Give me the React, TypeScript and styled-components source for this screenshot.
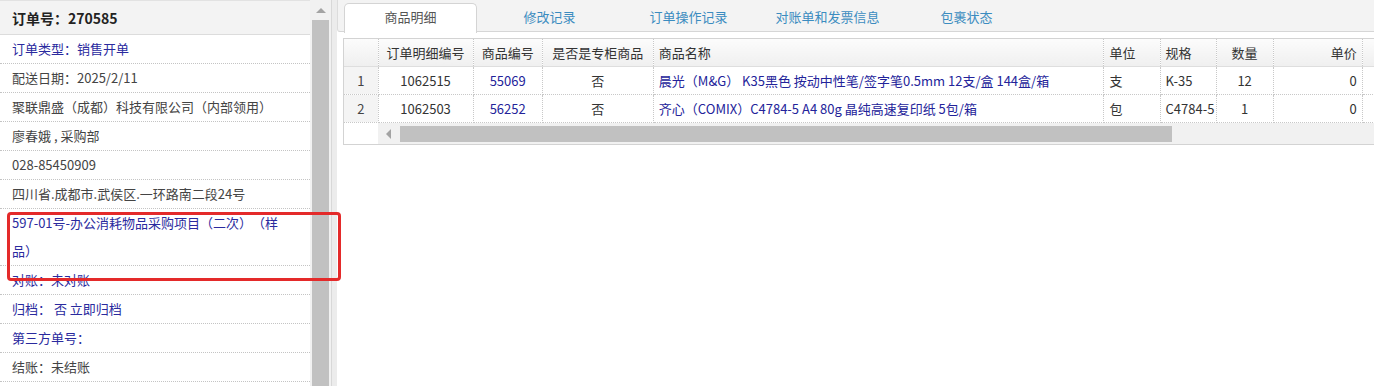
import React from "react";
import styled, { createGlobalStyle } from "styled-components";

const GlobalStyle = createGlobalStyle`
    html, body {
        margin: 0;
        padding: 0;
        background: #fff;
    }
    body {
        font-family: "Noto Sans CJK SC", "Microsoft YaHei", sans-serif;
        font-size: 13px;
        color: #333;
        text-spacing-trim: space-all;
    }
`;

interface infoRow {
    text: string;
    blue?: boolean;
}

const infoRows: infoRow[] = [
    { text: "订单类型：销售开单", blue: true },
    { text: "配送日期：2025/2/11" },
    { text: "聚联鼎盛（成都）科技有限公司（内部领用）" },
    { text: "廖春娥 , 采购部" },
    { text: "028-85450909" },
    { text: "四川省.成都市.武侯区.一环路南二段24号" },
    { text: "597-01号-办公消耗物品采购项目（二次）（样品）", blue: true },
    { text: "对账：未对账", blue: true },
    { text: "归档：  否 立即归档", blue: true },
    { text: "第三方单号：", blue: true },
    { text: "结账：未结账" },
];

const tabs = ["商品明细", "修改记录", "订单操作记录", "对账单和发票信息", "包裹状态"];

type Align = "left" | "center" | "right";

interface column {
    title: string;
    width: number;
    align: Align;
}

// last column runs past the window edge, so it stays blank
const columns: column[] = [
    { title: "", width: 34, align: "center" },
    { title: "订单明细编号", width: 95, align: "center" },
    { title: "商品编号", width: 69, align: "center" },
    { title: "是否是专柜商品", width: 111, align: "center" },
    { title: "商品名称", width: 450, align: "left" },
    { title: "单位", width: 56, align: "left" },
    { title: "规格", width: 56, align: "left" },
    { title: "数量", width: 57, align: "center" },
    { title: "单价", width: 89, align: "right" },
    { title: "", width: 130, align: "right" },
];

const items = [
    {
        id: "1062515",
        sku: "55069",
        counter: "否",
        name: "晨光（M&G） K35黑色 按动中性笔/签字笔0.5mm 12支/盒 144盒/箱",
        unit: "支",
        spec: "K-35",
        qty: "12",
        price: "0",
    },
    {
        id: "1062503",
        sku: "56252",
        counter: "否",
        name: "齐心（COMIX）C4784-5 A4 80g 晶纯高速复印纸 5包/箱",
        unit: "包",
        spec: "C4784-5",
        qty: "1",
        price: "0",
    },
];

const tableWidth = columns.reduce((sum, c) => sum + c.width, 0);

const App = () => {
    return (
        <>
            <GlobalStyle />
            <Page>
                <LeftPanel>
                    <InfoList>
                        <InfoHeader>订单号：270585</InfoHeader>
                        {infoRows.map((row, i) => (
                            <InfoItem key={i} $blue={!!row.blue}>{row.text}</InfoItem>
                        ))}
                    </InfoList>
                    <VScroll>
                        <UpArrow />
                        <VThumb />
                    </VScroll>
                </LeftPanel>
                <Splitter />
                <RightPanel>
                    <TabBar>
                        {tabs.map((t, i) => (
                            <Tab key={t} $active={i === 0}>{t}</Tab>
                        ))}
                    </TabBar>
                    <GridBox style={{ width: tableWidth + 2 }}>
                        <Grid>
                            <colgroup>
                                {columns.map((c, i) => <col key={i} style={{ width: c.width }} />)}
                            </colgroup>
                            <thead>
                                <tr>
                                    {columns.map((c, i) => (
                                        <HeadCell key={i} $align={c.align}>{c.title}</HeadCell>
                                    ))}
                                </tr>
                            </thead>
                            <tbody>
                                {items.map((it, i) => (
                                    <tr key={it.id}>
                                        <NumCell>{i + 1}</NumCell>
                                        <Cell $align="center">{it.id}</Cell>
                                        <Cell $align="center"><Link>{it.sku}</Link></Cell>
                                        <Cell $align="center">{it.counter}</Cell>
                                        <Cell $align="left"><Link>{it.name}</Link></Cell>
                                        <Cell $align="left">{it.unit}</Cell>
                                        <Cell $align="left">{it.spec}</Cell>
                                        <Cell $align="center">{it.qty}</Cell>
                                        <Cell $align="right">{it.price}</Cell>
                                        <Cell $align="right" />
                                    </tr>
                                ))}
                            </tbody>
                        </Grid>
                        <HScrollRow>
                            <HScrollGap />
                            <HScroll>
                                <LeftArrow />
                                <HThumb />
                            </HScroll>
                        </HScrollRow>
                    </GridBox>
                </RightPanel>
                <Highlight />
            </Page>
        </>
    );
};
export default App;

const Page = styled.div`
    position: relative;
    display: flex;
    width: 1374px;
    height: 386px;
    overflow: hidden;
`;

const LeftPanel = styled.div`
    display: flex;
    flex: none;
    width: 331px;
    height: 100%;
`;

const InfoList = styled.div`
    width: 310px;
    flex: none;
`;

const InfoHeader = styled.div`
    height: 35px;
    line-height: 35px;
    padding-left: 12px;
    background: #f3f3f3;
    border-top: 1px solid #e2e2e2;
    border-bottom: 1px solid #dcdcdc;
    box-sizing: border-box;
    font-size: 14px;
    font-weight: bold;
    color: #222;
`;

const InfoItem = styled.div<{ $blue: boolean }>`
    padding: 0 22px 0 12px;
    line-height: 28px;
    border-bottom: 1px dotted #c4c4c4;
    color: ${props => props.$blue ? '#2a2a9e' : '#444'};
`;

const VScroll = styled.div`
    position: relative;
    width: 21px;
    flex: none;
    background: #f1f1f1;
    padding: 20px 2px 0;
    box-sizing: border-box;
`;

const UpArrow = styled.div`
    position: absolute;
    top: 8px;
    left: 6px;
    width: 0;
    height: 0;
    border-left: 5px solid transparent;
    border-right: 5px solid transparent;
    border-bottom: 5px solid #a3a3a3;
`;

const VThumb = styled.div`
    height: 100%;
    background: #c1c1c1;
`;

const Splitter = styled.div`
    flex: none;
    width: 5px;
    background: #ececec;
    border-left: 1px solid #d8d8d8;
`;

const RightPanel = styled.div`
    flex: 1;
    min-width: 0;
    overflow: hidden;
    display: flex;
    flex-direction: column;
    align-items: flex-start;
`;

const TabBar = styled.div`
    align-self: stretch;
    display: flex;
    gap: 6px;
    height: 32px;
    box-sizing: border-box;
    padding: 3px 0 0 6px;
    background: #f3f3f3;
    border-left: 1px solid #dcdcdc;
    border-bottom: 1px solid #d6d6d6;
    border-bottom-left-radius: 3px;
`;

const Tab = styled.div<{ $active: boolean }>`
    flex: none;
    width: 133px;
    height: 29px;
    line-height: 25px;
    text-align: center;
    box-sizing: border-box;
    border: 1px solid transparent;
    border-bottom: none;
    border-radius: 5px 5px 0 0;
    ${props => props.$active ? `
        background: #fff;
        border-color: #d4d4d4;
        color: #555;
        height: 30px;
    ` : `
        color: #3b8cc0;
    `}
`;

const GridBox = styled.div`
    flex: none;
    margin: 6px 0 0 6px;
    border: 1px solid #d3d3d3;
    background: #fff;
`;

const Grid = styled.table`
    table-layout: fixed;
    border-collapse: collapse;
    width: 100%;
`;

const HeadCell = styled.th<{ $align: Align }>`
    height: 27px;
    padding: 0 5px;
    font-weight: normal;
    color: #333;
    text-align: ${props => props.$align};
    white-space: nowrap;
    overflow: hidden;
    background: linear-gradient(#fcfcfc, #efefef);
    border-right: 1px dotted #c8c8c8;
    border-bottom: 1px solid #dedede;
`;

const Cell = styled.td<{ $align: Align }>`
    height: 27px;
    padding: 0 5px;
    text-align: ${props => props.$align};
    white-space: nowrap;
    overflow: hidden;
    color: #333;
    border-right: 1px dotted #c8c8c8;
    border-bottom: 1px dotted #c8c8c8;
`;

const NumCell = styled(Cell).attrs({ $align: "center" as Align })`
    background: #f4f4f4;
    color: #444;
`;

const Link = styled.span`
    color: #23239a;
`;

const HScrollRow = styled.div`
    display: flex;
    height: 21px;
`;

const HScrollGap = styled.div`
    width: 34px;
    flex: none;
`;

const HScroll = styled.div`
    position: relative;
    flex: 1;
    background: #f1f1f1;
    padding: 3px 0 2px 22px;
`;

const LeftArrow = styled.div`
    position: absolute;
    left: 8px;
    top: 6px;
    width: 0;
    height: 0;
    border-top: 5px solid transparent;
    border-bottom: 5px solid transparent;
    border-right: 5px solid #a3a3a3;
`;

const HThumb = styled.div`
    width: 772px;
    height: 100%;
    background: #c1c1c1;
`;

const Highlight = styled.div`
    position: absolute;
    left: 7px;
    top: 212px;
    width: 334px;
    height: 69px;
    box-sizing: border-box;
    border: 3px solid #e42a2a;
    border-radius: 4px;
    pointer-events: none;
`;
